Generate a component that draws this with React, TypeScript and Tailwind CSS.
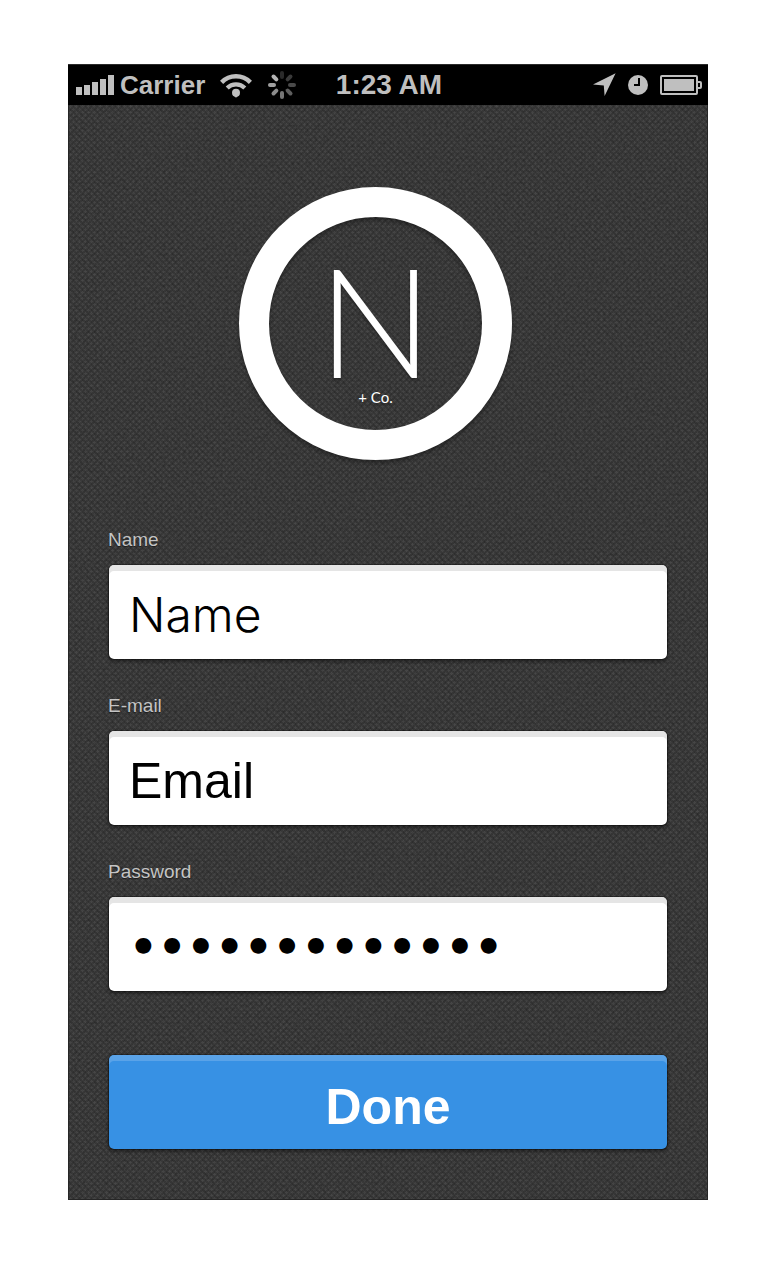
import React from "react";

const spokes = [
  { angle: 0, color: "#2a2a2a" },
  { angle: 45, color: "#3a3a3a" },
  { angle: 90, color: "#4a4a4a" },
  { angle: 135, color: "#5e5e5e" },
  { angle: 180, color: "#767676" },
  { angle: 225, color: "#8c8c8c" },
  { angle: 270, color: "#a0a0a0" },
  { angle: 315, color: "#b4b4b4" },
];

function SignalIcon() {
  return (
    <svg width="38" height="20" viewBox="0 0 38 20" fill="#bfbfbf" aria-hidden="true">
      <rect x="0" y="12" width="6" height="8" />
      <rect x="8" y="10" width="6" height="10" />
      <rect x="16" y="7" width="6" height="13" />
      <rect x="24" y="4" width="6" height="16" />
      <rect x="32" y="0" width="6" height="20" />
    </svg>
  );
}

function WifiIcon() {
  return (
    <svg width="32" height="25" viewBox="0 0 32 25" fill="none" stroke="#bfbfbf" aria-hidden="true">
      <path d="M1.6 9.4 A20 20 0 0 1 30.4 9.4" strokeWidth="4.4" />
      <path d="M7.2 15 A12.4 12.4 0 0 1 24.8 15" strokeWidth="4.2" />
      <circle cx="16" cy="19.8" r="4" fill="#bfbfbf" stroke="none" />
      <path d="M12.6 21.6 H19.4 L16 24.8 Z" fill="#bfbfbf" stroke="none" />
    </svg>
  );
}

function Spinner() {
  return (
    <svg width="28" height="28" viewBox="0 0 28 28" aria-hidden="true">
      {spokes.map((s) => (
        <line
          key={s.angle}
          x1="14"
          y1="2"
          x2="14"
          y2="6"
          stroke={s.color}
          strokeWidth="4"
          strokeLinecap="round"
          transform={`rotate(${s.angle} 14 14)`}
        />
      ))}
    </svg>
  );
}

function LocationIcon() {
  return (
    <svg width="23" height="24" viewBox="0 0 23 24" aria-hidden="true">
      <path d="M22.6 0.2 L11.6 23 L10.8 12.6 L0 11.6 Z" fill="#bfbfbf" />
    </svg>
  );
}

function ClockIcon() {
  return (
    <svg width="20" height="20" viewBox="0 0 20 20" aria-hidden="true">
      <circle cx="10" cy="10" r="10" fill="#bfbfbf" />
      <path d="M11 3 V10 H6" fill="none" stroke="#000" strokeWidth="2" />
    </svg>
  );
}

function BatteryIcon() {
  return (
    <svg width="42" height="20" viewBox="0 0 42 20" aria-hidden="true">
      <rect x="1" y="1" width="36" height="18" rx="1" fill="none" stroke="#bfbfbf" strokeWidth="2" />
      <rect x="4" y="4" width="30" height="12" fill="#bfbfbf" />
      <path d="M38 7 H40 Q41 7 41 8 V12 Q41 13 40 13 H38" fill="none" stroke="#bfbfbf" strokeWidth="2" />
    </svg>
  );
}

function StatusBar() {
  return (
    <header className="relative grid h-[41px] grid-cols-[1fr_auto_1fr] items-center border-t border-[#2a2a2a] bg-black pr-1.5 pl-2 leading-8 font-bold text-[#bfbfbf]">
      <div className="flex items-center">
        <SignalIcon />
        <span className="ml-1.5 text-[26px]">Carrier</span>
        <span className="ml-[15px] flex items-center gap-4">
          <WifiIcon />
          <Spinner />
        </span>
      </div>
      <time className="text-[28px]">1:23 AM</time>
      <div className="flex items-center justify-end gap-3">
        <LocationIcon />
        <ClockIcon />
        <BatteryIcon />
      </div>
    </header>
  );
}

function Texture() {
  return (
    <svg className="absolute inset-0 h-full w-full" aria-hidden="true">
      <defs>
        <pattern id="weave" width="6" height="6" patternUnits="userSpaceOnUse">
          <rect width="6" height="6" fill="#3a3a3a" />
          <path d="M0 1h3v1H0z M1 0h1v3H1z M3 4h3v1H3z M4 3h1v3H4z" fill="#474747" />
          <path d="M4 0h1v2H4z M1 4h1v2H1z" fill="#333333" />
        </pattern>
        <filter id="grain" x="0" y="0" width="100%" height="100%">
          <feTurbulence type="fractalNoise" baseFrequency="0.35" numOctaves="3" seed="4" />
          <feColorMatrix values="0 0 0 0 0  0 0 0 0 0  0 0 0 0 0  0.9 0 0 0 -0.3" />
        </filter>
      </defs>
      <rect width="100%" height="100%" fill="url(#weave)" />
      <rect width="100%" height="100%" filter="url(#grain)" opacity="0.4" />
    </svg>
  );
}

function Logo() {
  return (
    <div className="mr-[25px] flex size-[273px] flex-col items-center self-center rounded-full border-[30px] border-white pt-10 text-white shadow-[0_3px_4px_rgba(0,0,0,0.35),inset_0_3px_4px_rgba(0,0,0,0.35)] [font-family:Lato,sans-serif] text-shadow-[0_2px_3px_rgba(0,0,0,0.4)]">
      <span className="text-[152px] leading-[124px] font-light">N</span>
      <span className="mt-1 text-[15px] leading-6">+ Co.</span>
    </div>
  );
}

type FieldProps = {
  id: string;
  label: string;
  type: string;
  value: string;
  face: string;
};

function Field({ id, label, type, value, face }: FieldProps) {
  return (
    <div className="flex flex-col gap-3">
      <label
        htmlFor={id}
        className="text-[19px] leading-6 font-light text-[#c4c4c4] text-shadow-[0_1px_1px_rgba(0,0,0,0.5)]"
      >
        {label}
      </label>
      <input
        id={id}
        type={type}
        defaultValue={value}
        className={`h-24 w-full rounded-md border border-black/30 bg-white bg-clip-padding px-5 text-black shadow-[inset_0_6px_0_#e5e5e5,0_2px_3px_rgba(0,0,0,0.35)] outline-none ${face}`}
      />
    </div>
  );
}

export default function App() {
  return (
    <div className="bg-white px-[68px] pt-16 pb-[72px] [font-family:'Liberation_Sans',Arial,sans-serif]">
      <main className="relative isolate flex flex-col overflow-hidden bg-[#363636]">
        <StatusBar />
        <div className="relative flex flex-col border border-t-0 border-[#262626] px-[39px] pt-[82px] pb-[49px]">
          <Texture />
          <div className="relative flex flex-col">
            <Logo />
            <form className="mt-[68px] flex flex-col gap-[34px]" onSubmit={(e) => e.preventDefault()}>
              <Field
                id="name"
                label="Name"
                type="text"
                value="Name"
                face="pt-1 text-[48px] font-light [font-family:Inter,sans-serif]"
              />
              <Field id="email" label="E-mail" type="email" value="Email" face="pt-1.5 text-[50px]" />
              <Field
                id="password"
                label="Password"
                type="password"
                value="correcthorses"
                face="pt-1 text-[45px] font-bold [font-family:'DejaVu_Sans',sans-serif]"
              />
              <button
                type="submit"
                className="mt-7 h-24 w-full rounded-md border border-black/30 bg-[#3791e4] bg-clip-padding pt-2.5 text-[50px] font-bold text-white shadow-[inset_0_6px_0_#5aa3e8,0_2px_3px_rgba(0,0,0,0.35)]"
              >
                Done
              </button>
            </form>
          </div>
        </div>
      </main>
    </div>
  );
}
